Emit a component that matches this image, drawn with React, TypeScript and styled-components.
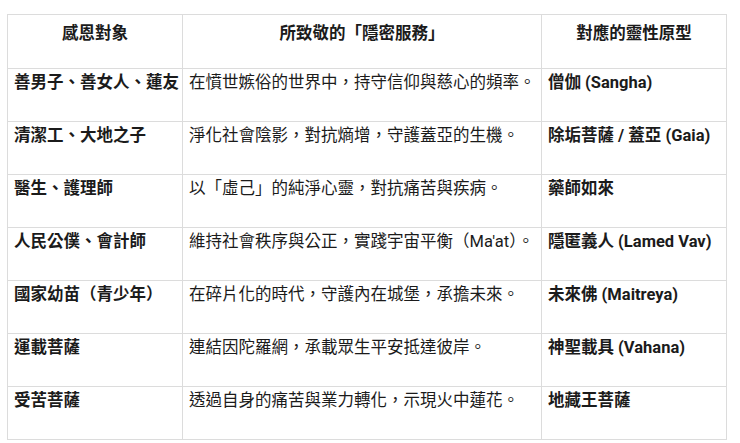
import styled, { createGlobalStyle } from 'styled-components';

const GlobalStyle = createGlobalStyle`
  html, body {
    margin: 0;
    padding: 0;
    background: #fff;
  }
  body {
    font-family: Roboto, "Noto Sans CJK TC", "Noto Sans", sans-serif;
    color: #1b1b1b;
  }
`;

const Page = styled.div`
  padding: 14px 0 0 7px;
`;

const Table = styled.table`
  border-collapse: collapse;
  table-layout: fixed;
  width: 717px;
  font-size: 16.5px;
`;

const HeadCell = styled.th<{ $w: number }>`
  width: ${(p) => p.$w}px;
  border: 1px solid #dcdcdc;
  padding: 7px 6px 22px;
  height: 24px;
  line-height: 24px;
  font-weight: 700;
  text-align: center;
  vertical-align: top;
  white-space: nowrap;
`;

const Cell = styled.td<{ $bold?: boolean }>`
  border: 1px solid #dcdcdc;
  padding: 2px 6px 26px;
  height: 24px;
  line-height: 24px;
  font-weight: ${(p) => (p.$bold ? 700 : 400)};
  vertical-align: top;
  white-space: nowrap;
  overflow: visible;
`;

const rows: [string, string, string][] = [
  ['善男子、善女人、蓮友', '在憤世嫉俗的世界中，持守信仰與慈心的頻率。', '僧伽 (Sangha)'],
  ['清潔工、大地之子', '淨化社會陰影，對抗熵增，守護蓋亞的生機。', '除垢菩薩 / 蓋亞 (Gaia)'],
  ['醫生、護理師', '以「虛己」的純淨心靈，對抗痛苦與疾病。', '藥師如來'],
  ['人民公僕、會計師', '維持社會秩序與公正，實踐宇宙平衡（Ma\'at）。', '隱匿義人 (Lamed Vav)'],
  ['國家幼苗（青少年）', '在碎片化的時代，守護內在城堡，承擔未來。', '未來佛 (Maitreya)'],
  ['運載菩薩', '連結因陀羅網，承載眾生平安抵達彼岸。', '神聖載具 (Vahana)'],
  ['受苦菩薩', '透過自身的痛苦與業力轉化，示現火中蓮花。', '地藏王菩薩'],
];

const App = () => {
  return (
    <Page>
      <GlobalStyle />
      <Table>
        <thead>
          <tr>
            <HeadCell $w={162}>感恩對象</HeadCell>
            <HeadCell $w={346}>所致敬的「隱密服務」</HeadCell>
            <HeadCell $w={172}>對應的靈性原型</HeadCell>
          </tr>
        </thead>
        <tbody>
          {rows.map(([who, service, archetype]) => (
            <tr key={who}>
              <Cell $bold>{who}</Cell>
              <Cell>{service}</Cell>
              <Cell $bold>{archetype}</Cell>
            </tr>
          ))}
        </tbody>
      </Table>
    </Page>
  );
};

export default App;
